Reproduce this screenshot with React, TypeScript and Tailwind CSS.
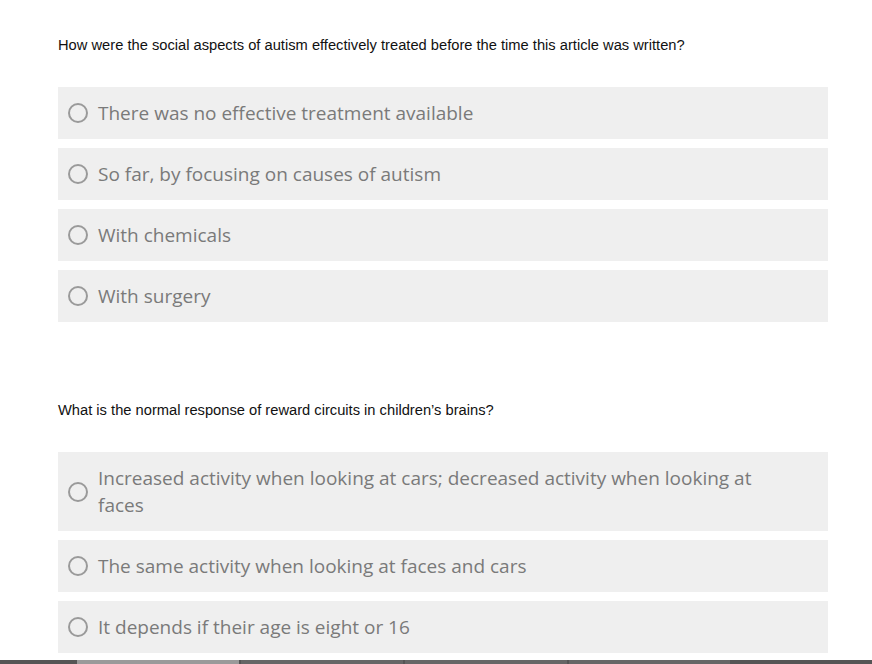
const questions = [
  {
    text: "How were the social aspects of autism effectively treated before the time this article was written?",
    options: [
      "There was no effective treatment available",
      "So far, by focusing on causes of autism",
      "With chemicals",
      "With surgery",
    ],
  },
  {
    text: "What is the normal response of reward circuits in children’s brains?",
    options: [
      "Increased activity when looking at cars; decreased activity when looking at faces",
      "The same activity when looking at faces and cars",
      "It depends if their age is eight or 16",
    ],
  },
];

const Radio = () => (
  <span className="shrink-0 w-5 h-5 rounded-full border-2 border-[#9a9a9a]" />
);

export default function App() {
  return (
    <div className="w-[872px] h-[664px] overflow-hidden bg-white flex flex-col">
      <div className="flex-1 overflow-hidden pl-[58px] pt-[37px]">
        {questions.map((q, qi) => (
          <div key={qi} className={"w-[770px] " + (qi > 0 ? "mt-[80px]" : "")}>
            <p className="text-[14.7px] leading-[16px] text-[#111] font-['Liberation_Sans',Arial,sans-serif]">
              {q.text}
            </p>
            <div className="mt-[34px] flex flex-col gap-[9px]">
              {q.options.map((o) => (
                <label
                  key={o}
                  className="flex items-center gap-[10px] bg-[#efefef] min-h-[52px] py-[12.5px] pl-[10px] pr-[40px]"
                >
                  <Radio />
                  <span className="text-[19px] leading-[27px] text-[#7a7a7a] font-['Open_Sans',sans-serif]">
                    {o}
                  </span>
                </label>
              ))}
            </div>
          </div>
        ))}
      </div>
      <div className="h-[4px] shrink-0 bg-[#555] flex pl-[77px] gap-[2px]">
        <div className="w-[162px] bg-[#9a9a9a]" />
        <div className="w-[162px] bg-[#666]" />
        <div className="w-[162px] bg-[#666]" />
        <div className="w-[161px] bg-[#666]" />
      </div>
    </div>
  );
}
